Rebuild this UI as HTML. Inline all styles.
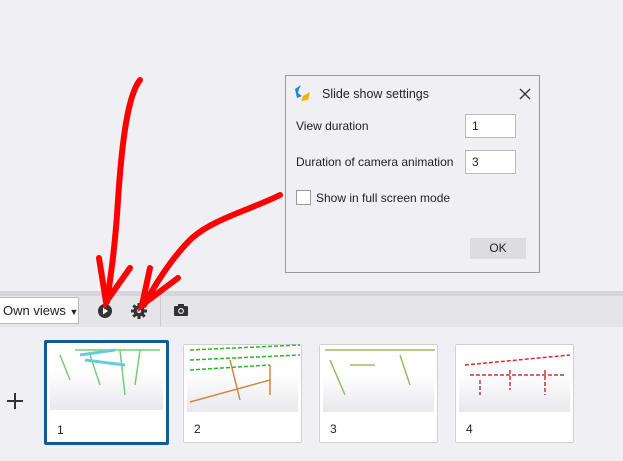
<html><head><style>
body{margin:0;width:623px;height:461px;background:#f0eff4;font-family:"Liberation Sans",sans-serif;position:relative;overflow:hidden;font-size:12px;color:#222}
.abs{position:absolute;white-space:nowrap}
.card{position:absolute;top:344px;width:117px;height:97px;background:#fff;border:1px solid #d0d0d6;border-radius:2px}
.card .img{position:absolute;left:3px;top:3px;right:3px;height:64px;background:linear-gradient(#fff 40%,#e8e8ee)}
.card .n{position:absolute;left:10px;top:77px;font-size:12px;color:#223}
</style></head><body>
<div class="abs" style="left:0;top:291px;width:623px;height:5px;background:#d6d5da"></div>
<div class="abs" style="left:0;top:296px;width:623px;height:31px;background:#e5e4e9"></div>
<div class="abs" style="left:160px;top:296px;width:1px;height:31px;background:#ccc"></div>
<div class="abs" style="left:-2px;top:297px;width:81px;height:27px;background:#fff;border:1px solid #bbb;box-sizing:border-box;font-size:13px;line-height:25px;padding-left:4px">Own views <span style="font-size:9px">▼</span></div>
<svg class="abs" style="left:95px;top:302px" width="100" height="20">
<circle cx="10" cy="9" r="7" fill="#333"/><path d="M8 5.5L13 9L8 12.5Z" fill="#fff"/>
<g transform="translate(44,9)" fill="#333"><circle r="5.5"/><g stroke="#333" stroke-width="3"><path d="M0-8V8M-8 0H8M-5.7-5.7L5.7 5.7M-5.7 5.7L5.7-5.7"/></g><circle r="2.2" fill="#e5e4e9"/></g>
<rect x="79" y="4" width="14" height="10" rx="1" fill="#333"/><rect x="83" y="2" width="6" height="3" fill="#333"/><circle cx="86" cy="9" r="3" fill="#e5e4e9"/><circle cx="86" cy="9" r="1.8" fill="#333"/>
</svg>
<svg class="abs" style="left:7px;top:393px" width="16" height="16"><path d="M8 0V16M0 8H16" stroke="#333" stroke-width="2"/></svg>
<div class="abs" style="left:44px;top:340px;width:119px;height:99px;border:3px solid #0f5c99;background:#fff;border-radius:2px"><div style="position:absolute;left:3px;top:3px;right:3px;height:64px;background:linear-gradient(#fff 40%,#e8e8ee)"></div><div style="position:absolute;left:10px;top:80px">1</div></div>
<div class="card" style="left:183px"><div class="img"></div><div class="n">2</div></div>
<div class="card" style="left:319px"><div class="img"></div><div class="n">3</div></div>
<div class="card" style="left:455px"><div class="img"></div><div class="n">4</div></div>
<svg class="abs" style="left:0;top:0" width="623" height="461">
<g fill="none" stroke-width="1.5">
<path d="M75 350L160 350M90 355L100 385M120 350L125 395M60 355L70 380M140 350L135 385" stroke="#7c7"/>
<path d="M80 355L115 350M85 360L125 365" stroke="#6cd" stroke-width="3"/>
<path d="M190 350L300 345M190 360L300 355M190 370L270 365" stroke="#2b2" stroke-dasharray="4 2"/>
<path d="M190 402L270 380M230 360L240 400M270 365L270 395" stroke="#c84"/>
<path d="M325 350L435 350M330 360L345 395M350 365L375 365M400 355L410 385" stroke="#9b6"/>
<path d="M465 365L570 355M470 375L565 375M480 380L480 395M510 370L510 390M545 370L545 395" stroke="#c33" stroke-dasharray="4 2"/>
</g>
<g fill="none" stroke="#f00" stroke-width="6" stroke-linecap="round">
<path d="M140 80C128 95 122 140 118 200C115 250 110 280 107 302"/>
<path d="M99 258L106 302L130 268"/>
<path d="M280 195C250 210 210 220 190 240C170 260 155 285 144 305"/>
<path d="M150 268L142 305L178 278"/>
</g>
</svg>
<div class="abs" style="left:285px;top:75px;width:253px;height:196px;background:#f0eff4;border:1px solid #999">
<svg class="abs" style="left:7px;top:8px" width="18" height="18"><path d="M8 1L2 5L4 14L9 12L5 9L6 5Z" fill="#1a8ad8"/><path d="M10 12L17 8L15 16L8 17Z" fill="#f5b400"/></svg>
<div class="abs" style="left:36px;top:11px;font-size:12.5px">Slide show settings</div>
<svg class="abs" style="left:233px;top:12px" width="12" height="12"><path d="M1 1L11 11M11 1L1 11" stroke="#333" stroke-width="1.3"/></svg>
<div class="abs" style="left:10px;top:43px">View duration</div>
<div class="abs" style="left:179px;top:38px;background:#fff;border:1px solid #bbb;line-height:22px;padding-left:6px;box-sizing:border-box;width:51px;height:24px">1</div>
<div class="abs" style="left:10px;top:79px">Duration of camera animation</div>
<div class="abs" style="left:179px;top:74px;width:51px;height:24px;background:#fff;border:1px solid #bbb;box-sizing:border-box;line-height:22px;padding-left:6px">3</div>
<div class="abs" style="left:10px;top:114px;width:15px;height:15px;background:#fff;border:1px solid #999;box-sizing:border-box"></div>
<div class="abs" style="left:30px;top:115px">Show in full screen mode</div>
<div class="abs" style="left:184px;top:162px;width:56px;height:21px;background:#dddce1;text-align:center;line-height:21px">OK</div>
</div>
</body></html>
